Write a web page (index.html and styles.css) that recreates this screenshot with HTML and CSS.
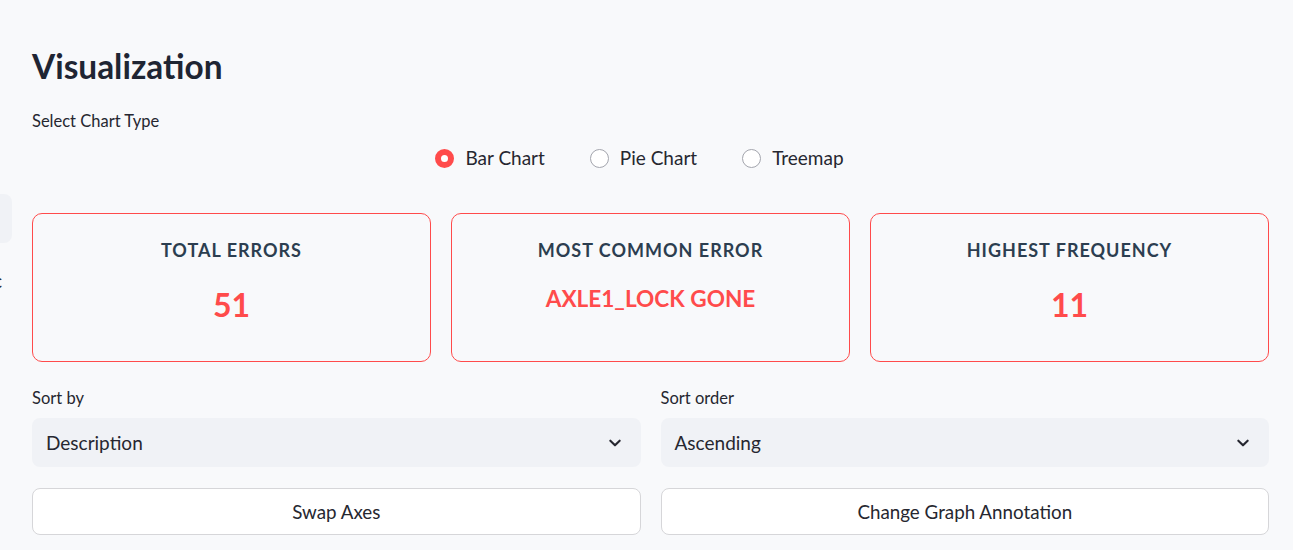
FILE: index.html
```html
<!DOCTYPE html>
<html>
<head>
<meta charset="utf-8">
<link rel="stylesheet" href="styles.css">
</head>
<body>
<div class="edge-stub"></div>
<div class="edge-char">c</div>
<main class="main">
  <h2 class="title">Visualization</h2>
  <div class="field-label">Select Chart Type</div>
  <div class="radio-group">
    <label class="radio-item"><span class="radio checked"></span><span class="radio-text">Bar Chart</span></label>
    <label class="radio-item"><span class="radio"></span><span class="radio-text">Pie Chart</span></label>
    <label class="radio-item"><span class="radio"></span><span class="radio-text">Treemap</span></label>
  </div>
  <div class="cards">
    <div class="card">
      <div class="card-title">TOTAL ERRORS</div>
      <div class="card-value">51</div>
    </div>
    <div class="card">
      <div class="card-title">MOST COMMON ERROR</div>
      <div class="card-value small">AXLE1_LOCK GONE</div>
    </div>
    <div class="card">
      <div class="card-title">HIGHEST FREQUENCY</div>
      <div class="card-value">11</div>
    </div>
  </div>
  <div class="two-col">
    <div class="col">
      <div class="field-label">Sort by</div>
      <div class="select">
        <span>Description</span>
        <svg class="chevron" viewBox="0 0 24 24" width="16" height="16"><path d="M5 8.5l7 7 7-7" fill="none" stroke="#262730" stroke-width="3.2" stroke-linecap="round" stroke-linejoin="round"/></svg>
      </div>
      <button class="btn">Swap Axes</button>
    </div>
    <div class="col">
      <div class="field-label">Sort order</div>
      <div class="select">
        <span>Ascending</span>
        <svg class="chevron" viewBox="0 0 24 24" width="16" height="16"><path d="M5 8.5l7 7 7-7" fill="none" stroke="#262730" stroke-width="3.2" stroke-linecap="round" stroke-linejoin="round"/></svg>
      </div>
      <button class="btn">Change Graph Annotation</button>
    </div>
  </div>
</main>
</body>
</html>
```
FILE: styles.css
```css
* { box-sizing: border-box; }
html, body {
  margin: 0;
  padding: 0;
  background: #f8f9fb;
  font-family: Lato, "Liberation Sans", sans-serif;
  color: #262730;
  overflow: hidden;
  height: 550px;
}
.main {
  padding: 44px 24px 0 32px;
}
.title {
  margin: 0;
  font-size: 33.4px;
  line-height: 44px;
  font-weight: 700;
  color: #1f2533;
}
.field-label {
  font-size: 16.5px;
  line-height: 22px;
  color: #262730;
}
.main > .field-label {
  margin-top: 22px;
}
.radio-group {
  display: flex;
  justify-content: center;
  gap: 45px;
  margin-top: 13px;
  padding-right: 22px;
}
.radio-item {
  display: flex;
  align-items: center;
  gap: 11px;
  font-size: 19px;
  line-height: 26px;
  color: #262730;
}
.radio {
  width: 19px;
  height: 19px;
  border-radius: 50%;
  border: 1.5px solid #a3a5ad;
  background: #fff;
}
.radio.checked {
  border: 6px solid #ff4b4b;
  background: #fff;
}
.cards {
  display: grid;
  grid-template-columns: repeat(3, 1fr);
  gap: 20px;
  margin-top: 42px;
}
.card {
  height: 149px;
  border: 1px solid #ff4b4b;
  border-radius: 10px;
  display: flex;
  flex-direction: column;
  align-items: center;
  padding-top: 25px;
}
.card-title {
  font-size: 18px;
  line-height: 22px;
  font-weight: 700;
  letter-spacing: 1px;
  color: #2c3e50;
}
.card-value {
  margin-top: 24px;
  font-size: 32px;
  line-height: 40px;
  font-weight: 700;
  color: #ff4b4b;
}
.card-value.small {
  margin-top: 22px;
  font-size: 22.6px;
  line-height: 32px;
}
.two-col {
  display: grid;
  grid-template-columns: 1fr 1fr;
  gap: 20px;
  margin-top: 25px;
}
.col {
  display: flex;
  flex-direction: column;
}
.select {
  margin-top: 9px;
  height: 49px;
  background: #f0f2f6;
  border-radius: 8px;
  display: flex;
  align-items: center;
  justify-content: space-between;
  padding: 0 18px 0 14px;
  font-size: 19px;
  color: #262730;
}
.btn {
  margin-top: 21px;
  height: 47px;
  background: #fff;
  border: 1px solid #d6d6d9;
  border-radius: 8px;
  font-family: inherit;
  font-size: 18.8px;
  color: #262730;
}
.edge-stub {
  position: absolute;
  left: -20px;
  top: 194px;
  width: 32px;
  height: 49px;
  background: #f0f2f6;
  border-radius: 8px;
}
.edge-char {
  position: absolute;
  left: -7px;
  top: 268px;
  font-size: 19px;
  line-height: 26px;
  color: #262730;
}
```
